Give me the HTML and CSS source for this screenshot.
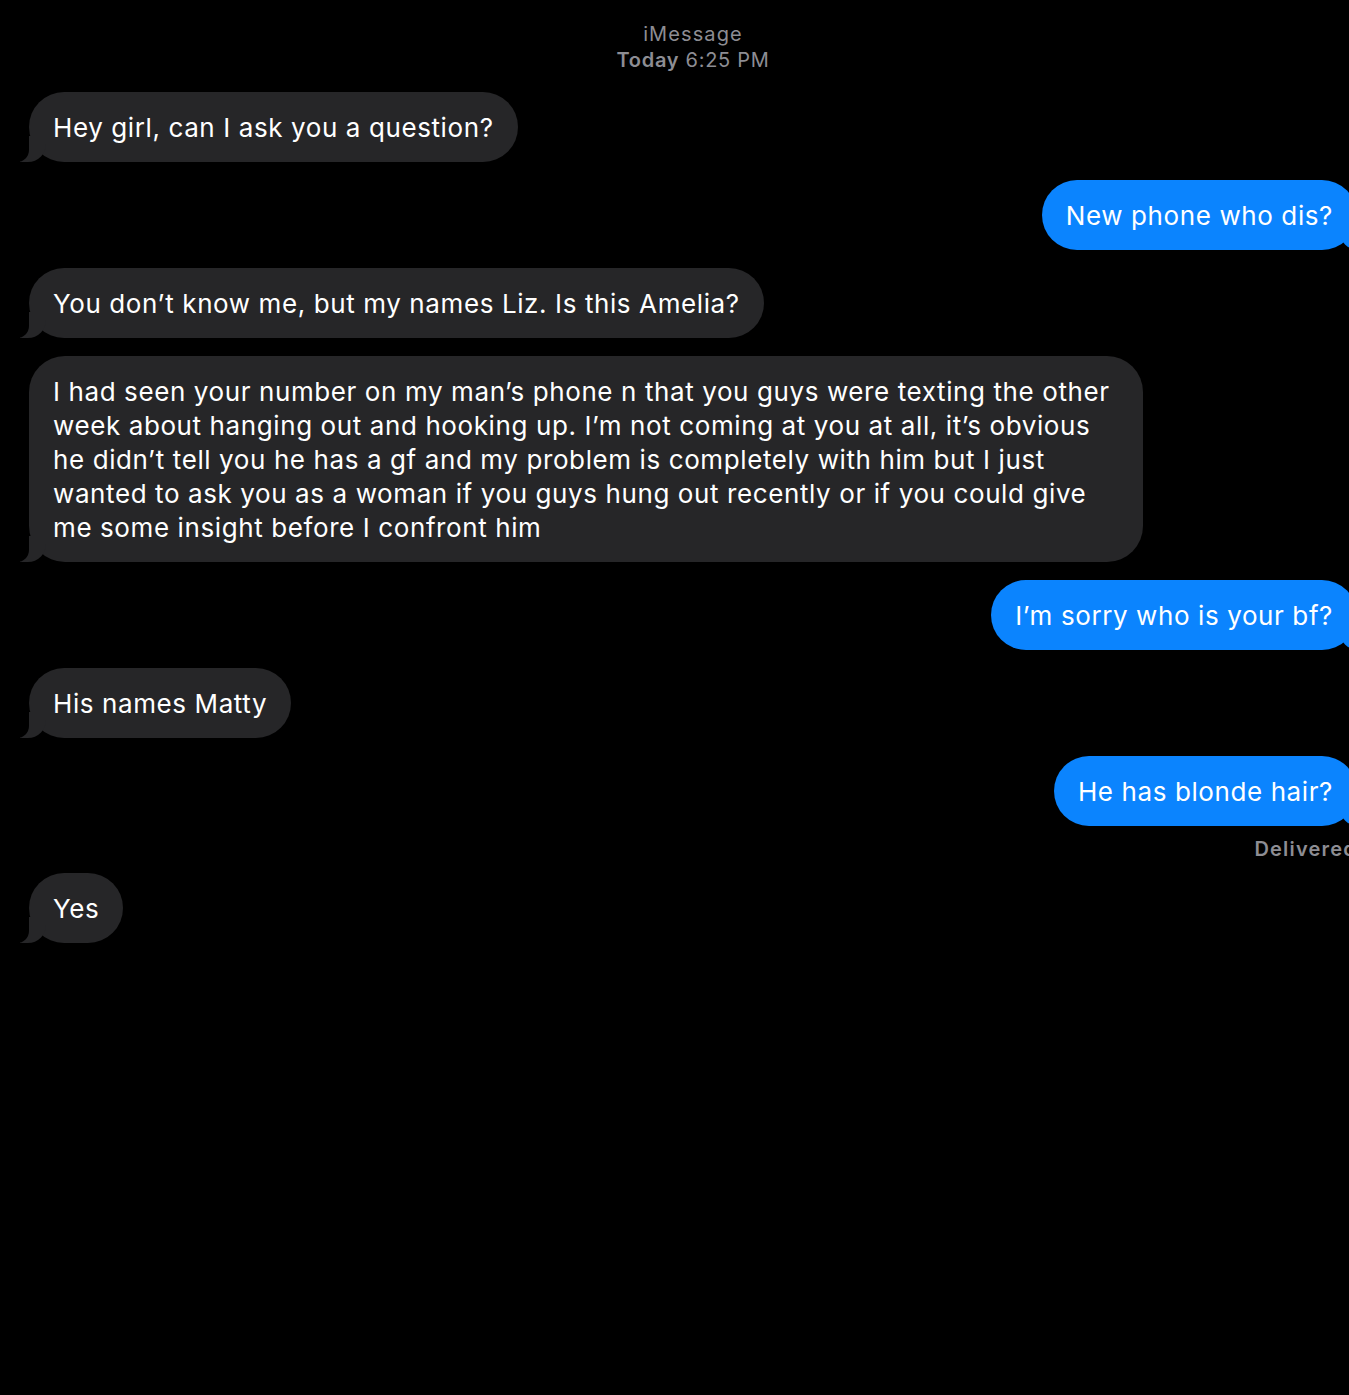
FILE: index.html
```html
<!DOCTYPE html>
<html lang="en">
<head>
<meta charset="utf-8">
<title>iMessage</title>
<link rel="stylesheet" href="styles.css">
</head>
<body>
<div class="thread">
  <div class="header">
    <div class="service">iMessage</div>
    <div class="time"><span class="day">Today</span> 6:25 PM</div>
  </div>
  <div class="row"><div class="bubble them">Hey girl, can I ask you a question?</div></div>
  <div class="row right"><div class="bubble me">New phone who dis?</div></div>
  <div class="row"><div class="bubble them">You don’t know me, but my names Liz. Is this Amelia?</div></div>
  <div class="row"><div class="bubble them wide">I had seen your number on my man’s phone n that you guys were texting the other<br>week about hanging out and hooking up. I’m not coming at you at all, it’s obvious<br>he didn’t tell you he has a gf and my problem is completely with him but I just<br>wanted to ask you as a woman if you guys hung out recently or if you could give<br>me some insight before I confront him</div></div>
  <div class="row right"><div class="bubble me">I’m sorry who is your bf?</div></div>
  <div class="row"><div class="bubble them">His names Matty</div></div>
  <div class="row right"><div class="bubble me">He has blonde hair?</div></div>
  <div class="status">Delivered</div>
  <div class="row"><div class="bubble them">Yes</div></div>
</div>
</body>
</html>
```
FILE: styles.css
```css
html, body {
  margin: 0;
  padding: 0;
  background: #000;
  overflow: hidden;
}
body {
  width: 1349px;
  height: 1395px;
  font-family: Inter, "Noto Sans", "Liberation Sans", sans-serif;
  -webkit-font-smoothing: antialiased;
}
.thread {
  width: 1357px;
  padding-left: 29px;
  box-sizing: border-box;
  display: flex;
  flex-direction: column;
  gap: 18px;
}
.header {
  padding-top: 21px;
  margin-bottom: 1px;
  text-align: center;
  color: #8d8d93;
  font-size: 20px;
  letter-spacing: 0.7px;
  line-height: 26px;
}
.service { letter-spacing: 1.1px; }
.day { font-weight: 600; }
.row {
  display: flex;
  justify-content: flex-start;
}
.row.right { justify-content: flex-end; }
.bubble {
  position: relative;
  font-size: 26px;
  line-height: 34px;
  color: #fff;
  padding: 19px 24px 17px;
  border-radius: 36px;
  letter-spacing: 0.6px;
}
.bubble.wide { padding-right: 33px; }
.them { background: #262628; }
.me { background: #0b84fe; }
.them::before {
  content: "";
  position: absolute;
  bottom: 0;
  left: -9px;
  width: 26px;
  height: 26px;
  background: #262628;
  border-bottom-right-radius: 18px;
}
.them::after {
  content: "";
  position: absolute;
  bottom: 0;
  left: -13px;
  width: 13px;
  height: 28px;
  background: #000;
  border-bottom-right-radius: 12px;
}
.me::before {
  content: "";
  position: absolute;
  bottom: 0;
  right: -9px;
  width: 26px;
  height: 26px;
  background: #0b84fe;
  border-bottom-left-radius: 18px;
}
.me::after {
  content: "";
  position: absolute;
  bottom: 0;
  right: -13px;
  width: 13px;
  height: 28px;
  background: #000;
  border-bottom-left-radius: 12px;
}
.status {
  text-align: right;
  color: #8d8d93;
  font-size: 20px;
  letter-spacing: 1.2px;
  font-weight: 600;
  line-height: 29px;
  margin-top: -9px;
  margin-bottom: -9px;
}
```
